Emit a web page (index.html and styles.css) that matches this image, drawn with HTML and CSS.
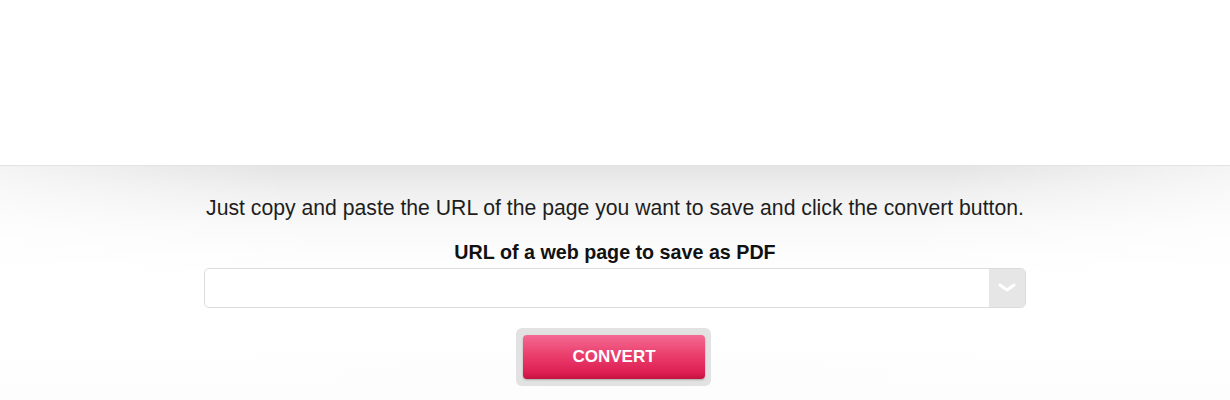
FILE: index.html
```html
<!DOCTYPE html>
<html>
<head>
<meta charset="utf-8">
<link rel="stylesheet" href="styles.css">
</head>
<body>
<div class="header"></div>
<div class="main">
  <p class="intro">Just copy and paste the URL of the page you want to save and click the convert button.</p>
  <label class="label">URL of a web page to save as PDF</label>
  <div class="field">
    <input class="url" type="text">
    <span class="drop"><svg width="18" height="10" viewBox="0 0 18 10"><path d="M2 2 L9 7 L16 2" fill="none" stroke="#fff" stroke-width="3" stroke-linecap="round" stroke-linejoin="round"/></svg></span>
  </div>
  <div class="btnwrap"><button class="convert">CONVERT</button></div>
</div>
</body>
</html>
```

FILE: styles.css
```css
html, body {
  margin: 0;
  padding: 0;
  background: #fff;
  font-family: "Liberation Sans", Arial, sans-serif;
}
.header {
  height: 165px;
  background: #fff;
  border-bottom: 1px solid #e4e4e4;
}
.main {
  height: 234px;
  display: flex;
  flex-direction: column;
  align-items: center;
  background:
    radial-gradient(ellipse 60% 100% at 50% 0%, rgba(255,255,255,0) 0%, rgba(255,255,255,0) 45%, rgba(255,255,255,0.85) 100%),
    linear-gradient(to bottom, #e4e4e4 0px, #efefef 25px, #f9f9f9 60px, #ffffff 110px, #ffffff 180px, #f2f2f2 234px);
}
.intro {
  margin: 30px 0 0;
  font-size: 21.2px;
  line-height: 24px;
  color: #1e1e1e;
}
.label {
  margin-top: 20px;
  font-size: 19.7px;
  line-height: 24px;
  font-weight: bold;
  color: #111;
}
.field {
  margin-top: 4px;
  width: 822px;
  height: 40px;
  box-sizing: border-box;
  border: 1px solid #dcdcdc;
  border-radius: 5px;
  background: #fff;
  display: flex;
  overflow: hidden;
}
.url {
  flex: 1;
  border: 0;
  outline: 0;
  background: transparent;
  margin: 0;
  padding: 0 10px;
  font: inherit;
}
.drop {
  width: 36px;
  background: #e6e6e6;
  display: flex;
  align-items: center;
  justify-content: center;
}
.btnwrap {
  margin-top: 20px;
  margin-right: 3px;
  padding: 7px 6px 7px 7px;
  background: #e2e2e2;
  border-radius: 6px;
  display: flex;
}
.convert {
  width: 182px;
  height: 44px;
  border: 0;
  border-radius: 4px;
  margin: 0;
  padding: 0;
  color: #fff;
  font-family: "Liberation Sans", Arial, sans-serif;
  font-weight: bold;
  font-size: 17px;
  background: linear-gradient(to bottom, #f46a92 0%, #ea3f6d 45%, #de1f54 85%, #c4123f 100%);
  box-shadow: 0 1px 2px rgba(0,0,0,0.25);
}
```
